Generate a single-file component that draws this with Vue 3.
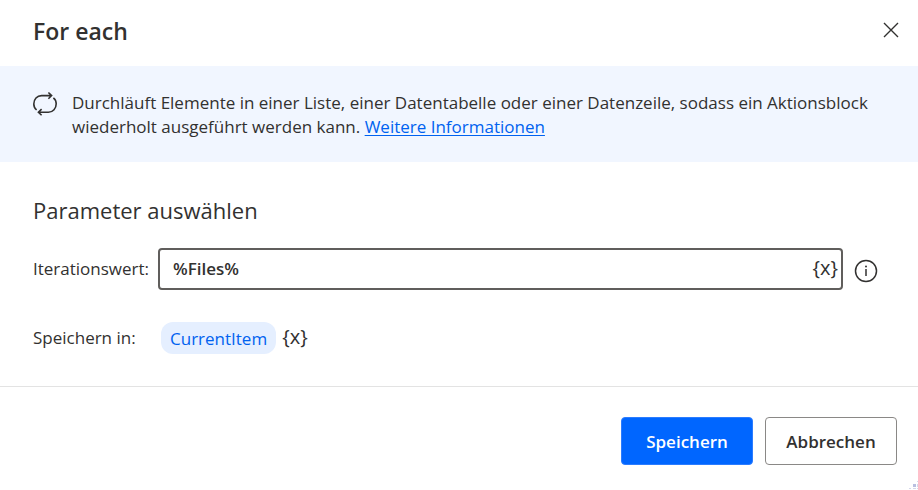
<script setup>
import { ref } from 'vue'

const iterationValue = ref('%Files%')
const variableName = ref('CurrentItem')
</script>

<template>
  <main class="dialog" role="dialog" aria-labelledby="dialog-title">
    <header class="header">
      <h1 id="dialog-title" class="title">For each</h1>
      <button class="icon-button" type="button" aria-label="Schließen">
        <svg width="16" height="16" viewBox="0 0 16 16" fill="none" stroke="currentColor" stroke-width="1.4">
          <path d="M1 1 15 15M15 1 1 15" />
        </svg>
      </button>
    </header>

    <section class="banner">
      <svg class="loop" width="26" height="26" viewBox="0 0 26 26" fill="none" stroke="currentColor" stroke-width="1.6">
        <path d="M4.600 19C2.900 17.600 1.800 15.500 1.800 13C1.800 8.300 5 4.600 9.600 4.600H19.500M16.400 1.500 19.600 4.600 16.400 7.700" />
        <path d="M21.400 6.800C23.200 8.200 24.200 10.400 24.200 12.800C24.200 17.500 21 21.200 16.400 21.200H6.500M9.600 18.100 6.400 21.200 9.600 24.300" />
      </svg>
      <p class="description">
        Durchläuft Elemente in einer Liste, einer Datentabelle oder einer Datenzeile, sodass ein Aktionsblock
        wiederholt ausgeführt werden kann. <a class="link" href="#">Weitere Informationen</a>
      </p>
    </section>

    <section class="parameters">
      <h2 class="subtitle">Parameter auswählen</h2>
      <div class="row">
        <label class="label" for="iteration-value">Iterationswert:</label>
        <div class="field">
          <input id="iteration-value" v-model="iterationValue" class="input" type="text" />
          <button class="variable" type="button" aria-label="Variable auswählen">{x}</button>
        </div>
        <button class="icon-button info" type="button" aria-label="Information">
          <svg width="24" height="24" viewBox="0 0 24 24" fill="none" stroke="currentColor" stroke-width="1.5">
            <circle cx="12" cy="12" r="10.500" />
            <path d="M12 10V17" />
            <circle cx="12" cy="7.500" r="1" fill="currentColor" stroke="none" />
          </svg>
        </button>
      </div>
      <div class="row">
        <span class="label">Speichern in:</span>
        <div class="output">
          <button class="chip" type="button">{{ variableName }}</button>
          <button class="variable" type="button" aria-label="Variable auswählen">{x}</button>
        </div>
      </div>
    </section>

    <footer class="footer">
      <button class="button primary" type="submit">Speichern</button>
      <button class="button" type="button">Abbrechen</button>
      <svg class="grip" width="10" height="10" viewBox="0 0 10 10">
        <path d="M5 4h3v3H5z" fill="#b9bfe0" />
        <path d="M9 1h1v1H9zM9 4h1v3H9zM1 8h2v1H1zM5 8h3v1H5zM9 8h1v1H9z" fill="#d5d8ec" />
      </svg>
    </footer>
  </main>
</template>

<style>
body {
  background: #fff;
}
</style>

<style scoped>
.dialog {
  position: relative;
  color: #323130;
  font-family: "Open Sans", "Noto Sans", sans-serif;
  font-size: 17px;
  line-height: 24px;
}

.dialog button,
.dialog input {
  font-family: inherit;
  color: inherit;
}

.header {
  display: flex;
  align-items: center;
  justify-content: space-between;
  box-sizing: border-box;
  min-height: 66px;
  padding: 0 15px 6px 33px;
}

.title {
  margin: 0;
  padding-top: 2px;
  font-size: 23px;
  font-weight: 600;
  line-height: 32px;
}

.icon-button {
  display: flex;
  flex: none;
  padding: 4px;
  border: 0;
  background: none;
}

.banner {
  display: flex;
  gap: 14px;
  padding: 25px 32px 23px;
  background: #f1f6ff;
}

.loop {
  flex: none;
}

.description {
  margin: 0;
}

.link {
  display: inline-block;
  color: #0062f0;
  text-underline-offset: 2px;
}

.parameters {
  display: flex;
  flex-direction: column;
  gap: 32px;
  padding: 32px 40px 32px 33px;
  border-bottom: 1px solid #e3e3e3;
}

.subtitle {
  margin: 0 0 -10px;
  font-size: 22px;
  font-weight: 400;
  line-height: 32px;
}

.row {
  display: flex;
  align-items: center;
}

.label {
  flex: none;
  width: 125px;
}

.field {
  display: flex;
  flex: 1;
  align-items: center;
  box-sizing: border-box;
  height: 42px;
  min-width: 0;
  padding: 0 3px 0 13px;
  border: 2px solid #605e5c;
  border-radius: 4px;
}

.input {
  flex: 1;
  min-width: 0;
  padding: 0;
  border: 0;
  outline: none;
  background: none;
  font-size: 17px;
  font-weight: 600;
  line-height: 24px;
}

.variable {
  padding: 0 0 2px;
  border: 0;
  background: none;
  font-size: 20px;
  line-height: 24px;
}

.info {
  padding: 3px 0 0 11px;
}

.output {
  display: flex;
  align-items: center;
  gap: 6px;
  padding-left: 3px;
}

.chip {
  height: 32px;
  padding: 0 9px;
  border: 0;
  border-radius: 12px;
  background: #e5efff;
  font-size: 17px;
}

.output .chip {
  color: #0062f0;
}

.footer {
  display: flex;
  justify-content: flex-end;
  gap: 12px;
  padding: 30px 21px 25px;
}

.button {
  width: 132px;
  height: 48px;
  padding: 0;
  border: 1px solid #8a8886;
  border-radius: 4px;
  background: #fff;
  font-size: 17px;
  font-weight: 600;
}

.footer .primary {
  border-color: #2b7cff;
  background: #0066ff;
  color: #fff;
}

.grip {
  position: absolute;
  right: 0;
  bottom: 0;
}
</style>
